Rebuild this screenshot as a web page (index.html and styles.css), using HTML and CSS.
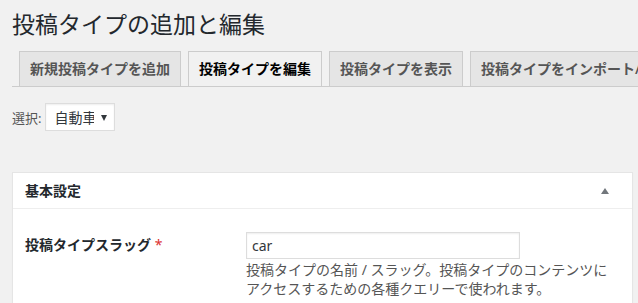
FILE: index.html
```html
<!DOCTYPE html>
<html lang="ja">
<head>
    <meta charset="UTF-8">
    <meta name="viewport" content="width=device-width, initial-scale=1.0">
    <title>投稿タイプの追加と編集</title>
    <link rel="stylesheet" href="styles.css">
</head>
<body>
    <div class="wrap">
        <h1>投稿タイプの追加と編集</h1>

        <h2 class="nav-tab-wrapper">
            <a class="nav-tab" href="#">新規投稿タイプを追加</a>
            <a class="nav-tab nav-tab-active" href="#">投稿タイプを編集</a>
            <a class="nav-tab" href="#">投稿タイプを表示</a>
            <a class="nav-tab" href="#">投稿タイプをインポート/エクスポート</a>
        </h2>

        <div class="choose">
            <label for="post_type">選択:</label>
            <span class="select-wrap">
                <select id="post_type">
                    <option>自動車</option>
                </select>
            </span>
        </div>

        <div class="postbox">
            <div class="postbox-head">
                <h3>基本設定</h3>
                <span class="toggle"></span>
            </div>
            <div class="inside">
                <div class="field">
                    <label class="field-label" for="slug">投稿タイプスラッグ <span class="required">*</span></label>
                    <div class="field-input">
                        <input type="text" id="slug" value="car">
                        <p class="description">投稿タイプの名前 / スラッグ。投稿タイプのコンテンツにアクセスするための各種クエリーで使われます。</p>
                    </div>
                </div>
            </div>
        </div>
    </div>
</body>
</html>
```

FILE: styles.css
```css
body {
    margin: 0;
    background: #f1f1f1;
    color: #444;
    font-family: "Noto Sans", "Noto Sans CJK JP", sans-serif;
    font-size: 13px;
    overflow: hidden;
}
.wrap {
    padding: 0 5px 0 12px;
}
h1 {
    margin: 0;
    padding: 9px 0 4px;
    font-size: 23px;
    font-weight: 400;
    line-height: 30px;
    color: #23282d;
}
.nav-tab-wrapper {
    margin: 0 -5px 0 0;
    padding-top: 8px;
    border-bottom: 1px solid #ccc;
    display: flex;
    white-space: nowrap;
    overflow: hidden;
    font-size: 14px;
    line-height: 24px;
}
.nav-tab {
    flex: none;
    margin-left: 7px;
    margin-bottom: -1px;
    padding: 5px 10px;
    border: 1px solid #ccc;
    border-bottom: none;
    background: #e5e5e5;
    color: #555;
    font-weight: 600;
    text-decoration: none;
}
.nav-tab-active {
    background: #f1f1f1;
    border-bottom: 1px solid #f1f1f1;
    color: #000;
}
.choose {
    margin-top: 16px;
    display: flex;
    align-items: center;
    gap: 4px;
    color: #555;
}
.select-wrap {
    position: relative;
    display: inline-block;
}
.select-wrap::after {
    content: "";
    position: absolute;
    right: 8px;
    top: 12px;
    border-left: 3.5px solid transparent;
    border-right: 3.5px solid transparent;
    border-top: 6px solid #32373c;
}
select {
    appearance: none;
    -webkit-appearance: none;
    height: 28px;
    width: 70px;
    margin: 0;
    padding: 0 20px 0 8px;
    border: 1px solid #ddd;
    border-radius: 0;
    box-shadow: inset 0 1px 2px rgba(0, 0, 0, 0.07);
    background: #fff;
    color: #32373c;
    font-family: inherit;
    font-size: 14px;
}
.postbox {
    margin-top: 41px;
    background: #fff;
    border: 1px solid #e5e5e5;
    box-shadow: 0 1px 1px rgba(0, 0, 0, 0.04);
}
.postbox-head {
    display: flex;
    align-items: center;
    justify-content: space-between;
    padding: 8px 23px 8px 12px;
    border-bottom: 1px solid #eee;
}
.postbox-head h3 {
    margin: 0;
    font-size: 14px;
    font-weight: 600;
    line-height: 19px;
    color: #23282d;
}
.toggle {
    width: 0;
    height: 0;
    border-left: 4px solid transparent;
    border-right: 4px solid transparent;
    border-bottom: 6px solid #72777c;
}
.inside {
    padding: 23px 12px 12px;
}
.field {
    display: flex;
}
.field-label {
    width: 221px;
    flex: none;
    font-size: 14px;
    font-weight: 600;
    line-height: 26px;
    color: #23282d;
}
.required {
    color: #dc3232;
    font-weight: 400;
}
.field-input input {
    box-sizing: border-box;
    width: 274px;
    height: 27px;
    margin: 0;
    padding: 0 5px;
    border: 1px solid #ddd;
    box-shadow: inset 0 1px 2px rgba(0, 0, 0, 0.07);
    font-family: inherit;
    font-size: 14px;
    color: #32373c;
}
.description {
    margin: 1px 0 0;
    font-size: 14px;
    line-height: 19px;
    color: #555;
}
```
